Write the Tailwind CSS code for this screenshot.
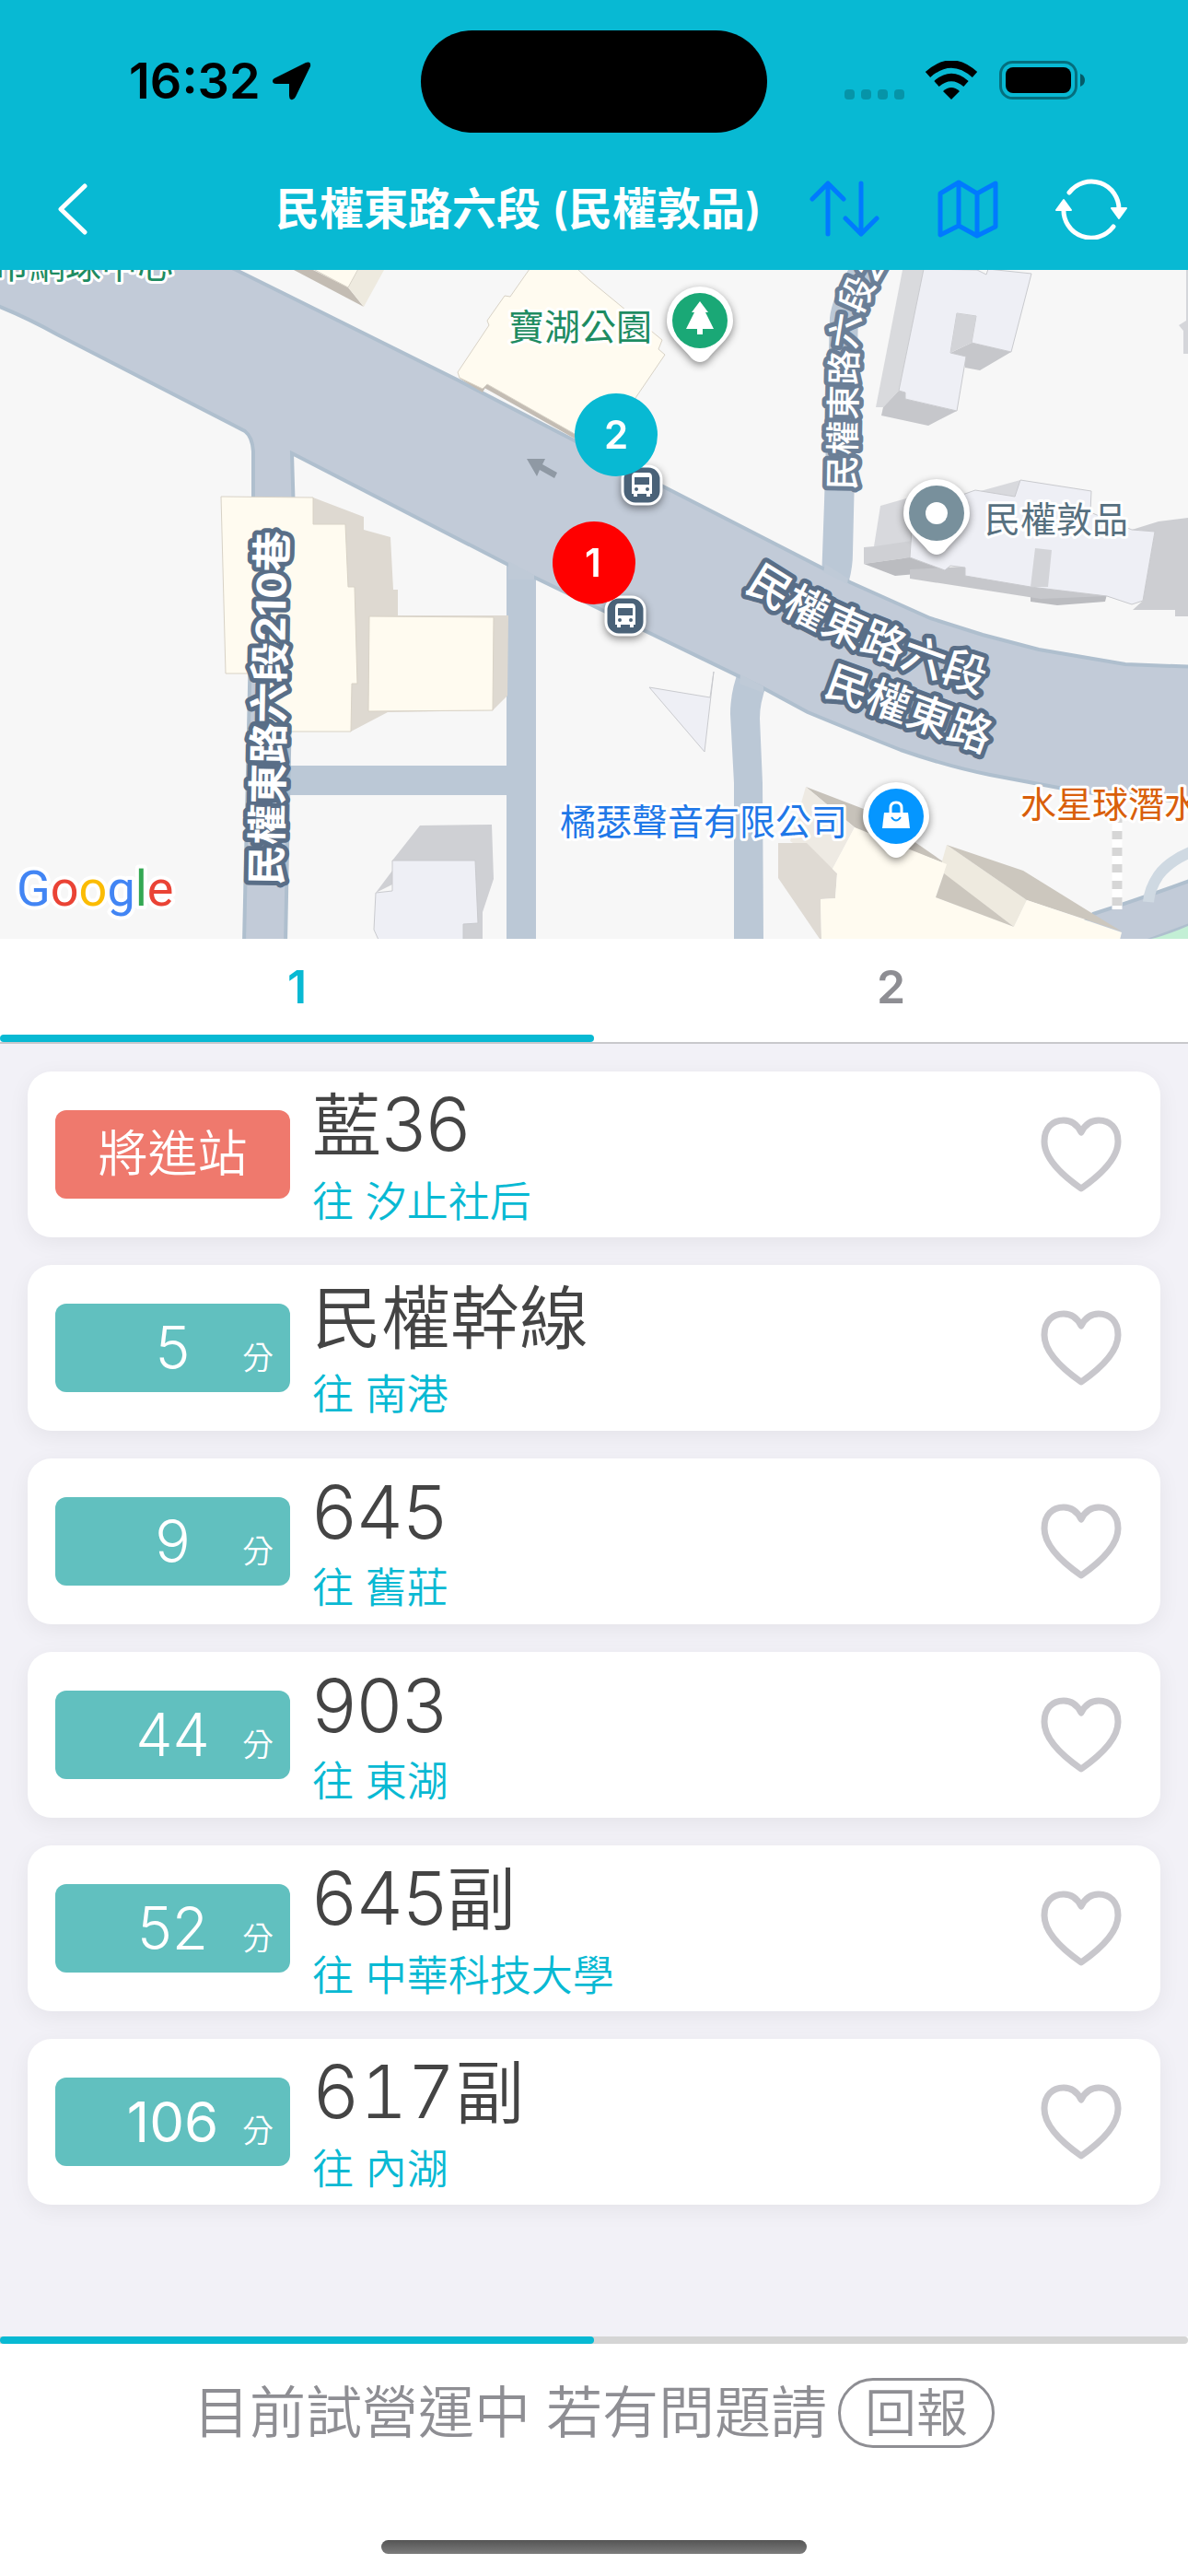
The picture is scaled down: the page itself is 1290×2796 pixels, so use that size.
<!DOCTYPE html>
<html lang="zh-Hant">
<head>
<meta charset="utf-8">
<meta name="viewport" content="width=device-width, initial-scale=1">
<title>民權東路六段 (民權敦品)</title>
<script src="https://cdn.jsdelivr.net/npm/@tailwindcss/browser@4"></script>
</head>
<body class="flex min-h-screen flex-col bg-white font-['Inter','Noto_Sans_CJK_TC',sans-serif]">

<!-- Shared symbols -->
<svg class="hidden" aria-hidden="true">
  <symbol id="heart" viewBox="0 0 88 82"><path d="M44 78 C24 64 4 46 4 27 C4 12 13 4 25 4 C34 4 40 9 44 17 C48 9 54 4 63 4 C75 4 84 12 84 27 C84 46 64 64 44 78Z" fill="none" stroke="#c8c7cc" stroke-width="7" stroke-linejoin="round"/></symbol>
  <symbol id="pin" viewBox="0 0 80 92" overflow="visible"><path d="M40 4 A36 37 0 0 1 76 41 C76 58 62 66 49 82 Q40 90 31 82 C18 66 4 58 4 41 A36 37 0 0 1 40 4Z" fill="#fff"/></symbol>
  <symbol id="bus" viewBox="0 0 46 46" overflow="visible"><rect x="2" y="2" width="42" height="41" rx="14" fill="#4a6278" stroke="#fff" stroke-width="3"/><path d="M16 9h14q4 0 4 5v18h-2v3h-4v-3H18v3h-4v-3h-2V14q0-5 4-5Z" fill="#fff"/><rect x="15" y="14" width="16" height="8" fill="#4a6278"/><circle cx="17" cy="27" r="2" fill="#4a6278"/><circle cx="29" cy="27" r="2" fill="#4a6278"/></symbol>
</svg>

<header class="bg-[#08b9d3]">
  <div class="relative flex h-[176px] items-center justify-between pr-[112px] pl-[140px]">
    <div class="flex items-center gap-3">
      <span class="text-[54px] leading-[60px] font-semibold">16:32</span>
      <svg class="h-[42px] w-[43px]" viewBox="0 0 43 42" aria-label="定位"><path d="M3 18 L37 1 Q43 -1 42 5 L26 38 Q24 42 21 41 Q19 40 19 37 V24 H5 Q1 24 1 21 Q1 19 3 18Z"/></svg>
    </div>
    <div class="absolute top-[33px] left-1/2 h-[111px] w-[376px] -translate-x-1/2 rounded-full bg-black"></div>
    <div class="flex items-center">
      <svg class="h-[44px] w-[261px]" viewBox="0 0 261 44" aria-label="訊號、Wi-Fi、電池">
        <g fill="#000" fill-opacity=".2"><rect y="31" width="11" height="11" rx="4"/><rect x="18" y="31" width="11" height="11" rx="4"/><rect x="36" y="31" width="11" height="11" rx="4"/><rect x="54" y="31" width="11" height="11" rx="4"/></g>
        <path d="M116 42 L107 33 Q116 25 125 33Z"/>
        <path d="M100 25 Q116 11 132 25" fill="none" stroke="#000" stroke-width="8"/>
        <path d="M90.500 15 Q116 -8 141.500 15" fill="none" stroke="#000" stroke-width="8"/>
        <rect x="169.500" y="1.500" width="82" height="39" rx="13" fill="none" stroke="#000" stroke-opacity=".4" stroke-width="3"/>
        <rect x="175" y="7" width="71" height="28" rx="8"/>
        <path d="M256 14 Q261 16 261 21 T256 28Z" fill-opacity=".5"/>
      </svg>
    </div>
  </div>
  <nav class="flex h-[117px] items-center justify-between pr-[66px] pb-[15px] pl-[59px]">
    <button type="button" aria-label="返回" class="p-1"><svg class="h-[56px] w-[34px]" viewBox="0 0 34 56"><path d="M29 3 L3 28 L29 53" fill="none" stroke="#fff" stroke-width="5" stroke-linecap="round" stroke-linejoin="round"/></svg></button>
    <div class="flex items-center">
      <h1 class="mr-[52px] text-[48px] leading-[60px] font-semibold text-white">民權東路六段 (民權敦品)</h1>
      <button type="button" aria-label="排序" class="mr-[62px]"><svg class="h-[62px] w-[76px]" viewBox="0 0 76 62"><g fill="none" stroke="#007aff" stroke-width="5" stroke-linecap="round" stroke-linejoin="round"><path d="M20 58V3M3 20L20 3L37 20M56 3V58M39 41L56 58L73 41"/></g></svg></button>
      <button type="button" aria-label="地圖" class="mr-[61px]"><svg class="h-[64px] w-[68px]" viewBox="0 0 68 64"><g fill="none" stroke="#007aff" stroke-width="5" stroke-linecap="round" stroke-linejoin="round"><path d="M4 15L24 3L44 15L64 4V51L44 61L24 50L4 60ZM24 3V50M44 15V61"/></g></svg></button>
      <button type="button" aria-label="重新整理"><svg class="h-[66px] w-[78px]" viewBox="0 0 78 66"><g fill="none" stroke="#fff" stroke-width="5" stroke-linecap="round"><path d="M15 15 A30 30 0 0 1 69 34M63 52 A30 30 0 0 1 9 32"/></g><g fill="#fff" stroke="#fff" stroke-width="2" stroke-linejoin="round"><path d="M61 32H77L69 43ZM1 34H17L9 23Z"/></g></svg></button>
    </div>
  </nav>
</header>

<section aria-label="地圖" class="h-[726px] overflow-hidden bg-[#f7f7f7]">
<svg class="block h-full w-full" viewBox="0 293 1290 726" preserveAspectRatio="xMidYMid slice">
  <!-- minor roads -->
  <g fill="#bbc8d6">
    <path d="M550 600H582V1019H550ZM312 831H552V863H312Z"/>
    <path d="M803 725Q793 750 793 775L797 850V1019H829L828 850L825 780Q825 760 834 740Z"/>
    <path d="M921 293Q903 325 901 345L895 545L892 630H922Q926 615 926 600L932 340Q935 325 955 293Z"/>
  </g>
  <!-- main roads -->
  <g fill="#c2cbd8" stroke="#afbfce" stroke-width="4">
    <path d="M-5 280V331Q30 345 62 363L266 468Q274 474 275 490V560L265 1025H310L319 560L317 492L550 612L701 685L829 747L877 773Q930 795 978 814Q1030 832 1075 841L1160 857Q1230 868 1300 870V724L1222 721L1128 705L1067 689L1010 671L923 632L720 528L498 413L315 322L230 280Z"/>
    <path d="M1150 1025L1187 992Q1240 975 1300 953V1001Q1260 1016 1235 1025Z"/>
  </g>
  <!-- openings where minor roads join -->
  <path d="M552 609L580 624V629H552ZM804 732L829 745V752L803 742ZM896 612L921 628L920 634L894 621Z" fill="#bfcad7"/>
  <path d="M1250 1019Q1265 1016 1290 1005V1019Z" fill="#c3efd5"/>
  <path d="M1295 924Q1270 934 1258 950Q1248 965 1247 979" fill="none" stroke="#cfd9e2" stroke-width="12"/>
  <path d="M1213 884V987" stroke="#fff" stroke-width="11"/><path d="M1213 884V987" stroke="#d6d6d6" stroke-width="11" stroke-dasharray="9 9"/>
  <path d="M572 498L592 498L589 504L605 513L602 519L586 510L583 517Z" fill="#8f99a4"/>

  <!-- cream buildings -->
  <g fill="#c3bcb3"><path d="M319 293L395 333L378 312L340 293ZM498 410L524 426L529 417Z"/><path d="M529 417L626 471L624 476L526 421Z"/></g>
  <path d="M378 312L395 333L417 293H389Z" fill="#eeeadf"/>
  <g fill="#fffbf0" stroke="#d8d2c6" stroke-width="1">
    <path d="M340 292L378 312L389 292Z"/>
    <path d="M575 292L554 322L548 321L529 348L531 353L497 404L499 410L524 422L529 417L624 471L660 490L690 432L722 385L715 379L719 369L640 304L627 292Z"/>
  </g>
  <g fill="#ded9d1"><path d="M340 540L395 561V575L424 583L427 640H432V668H552L551 755L535 771L421 773L381 794L340 600Z"/></g>
  <g fill="#fffbf0" stroke="#d8d2c6" stroke-width="1">
    <path d="M240 539L340 540V569H375L378 637H385L388 742H382L381 794H290V731H245Z"/>
    <path d="M401 669L536 670L535 771L400 772Z"/>
  </g>
  <g>
    <path d="M875 854L943 880V912L928 898Z" fill="#c7c2ba"/>
    <path d="M875 854L928 898L904 943L858 913Z" fill="#eeeae3"/>
    <path d="M845 915H876L904 943L909 948L907 975L891 976L892 1019H890L845 953Z" fill="#dfdad3"/>
    <path d="M992 913L1028 938L980 920Z" fill="#c7c2ba"/>
    <path d="M1028 917L1115 977L1101 1006L1020 945Z" fill="#eeeadf"/>
    <path d="M1028 917L1111 945L1187 992L1218 1011L1115 977Z" fill="#ccc7be"/>
    <path d="M928 898L1028 938L1016 974L1101 1006L1115 977L1218 1012L1216 1020H892L891 976L907 975L909 948L904 943Z" fill="#fffbf0"/>
    <path d="M1025 948L1101 1006L1016 974Z" fill="#ccc7be"/>
  </g>

  <!-- grey buildings -->
  <g>
    <path d="M426 934L456 896L534 895L536 954L524 990V1019H503L426 960L408 969L426 945Z" fill="#cfd0d4"/>
    <path d="M426 934H516L519 1002L503 1003V1020H411L406 1009L408 969L426 967Z" fill="#eeeff5" stroke="#c9cace"/>
    <path d="M705 746L771 757L775 729L765 816Z" fill="#eeeff5" stroke="#c9cace"/>
    <path d="M980 293L951 442H959L976 424L1003 293Z" fill="#d9dadd"/>
    <path d="M957 451L1008 462L1039 446L983 433L983 426L976 424L959 442ZM1055 372L1098 382L1064 402L1048 399V387L1032 383Z" fill="#c6c7cb"/>
    <path d="M1003 292L1061 293L1071 298L1073 292L1120 297L1098 382L1055 372L1060 343L1039 340L1032 383L1049 387L1039 446L983 433V426L976 424Z" fill="#eeeff5" stroke="#c9cace"/>
    <path d="M1039 340L1060 343L1055 372L1032 383Z" fill="#d3d4d8"/>
    <path d="M1288 293V348L1280 353L1285 359V384H1290V293Z" fill="#d5d6da"/>
    <path d="M1229 575L1258 566L1290 562V669H1276V662H1230L1241 652L1254 577Z" fill="#cdced2"/>
    <path d="M956 549L984 541L1008 560L988 607L949 593ZM1050 537L1108 521L1102 545Z" fill="#d8d9dd"/>
    <path d="M938 594L950 593L990 587L988 605L938 612Z" fill="#cfd0d4"/>
    <path d="M938 612L988 605L1030 620L972 625ZM1119 645H1202L1200 653L1148 657L1119 653Z" fill="#bbbcc0"/>
    <path d="M988 628V618L1048 615L1125 637L1202 647L1130 650Z" fill="#c6c7cb"/>
    <path d="M1059 532L1102 539L1108 521L1185 533L1184 556L1229 575L1254 577L1241 652L1229 656L1202 647L1119 637L1048 625V616L1032 614L1026 619L988 605L990 575L1045 537Z" fill="#eeeff5" stroke="#c9cace"/>
    <path d="M1124 595L1142 597L1138 637L1119 637Z" fill="#d3d4d8"/>
  </g>

  <!-- place labels -->
  <g font-size="39" stroke="#fff" stroke-width="6" stroke-linejoin="round" paint-order="stroke">
    <text x="-7" y="302" fill="#1e8c62">市網球中心</text>
    <text x="552" y="369" fill="#1e8c62">寶湖公園</text>
    <text x="1069" y="578" fill="#57707f">民權敦品</text>
    <text x="608" y="906" fill="#1f78e8">橘瑟聲音有限公司</text>
    <text x="1108" y="887" fill="#d95f0b">水星球潛水</text>
  </g>
  <!-- road labels -->
  <path id="lane" d="M928 532L931 365Q935 330 971 275" fill="none"/>
  <path id="main" d="M808 639Q905 706 1100 763" fill="none"/>
  <g fill="#fff" stroke="#596e87" stroke-linejoin="round" paint-order="stroke" font-weight="500" stroke-width="10">
    <text transform="translate(305 961) rotate(-89)" font-size="44" font-weight="700">民權東路六段210巷</text>
    <text font-size="38" stroke="#6b7f97"><textPath href="#lane">民權東路六段2</textPath></text>
    <text font-size="47"><textPath href="#main">民權東路六段</textPath></text>
    <text transform="translate(893 753) rotate(20)" font-size="47">民權東路</text>
  </g>

  <!-- pins -->
  <g class="drop-shadow-[0_3px_4px_rgba(0,0,0,0.45)]">
    <use href="#pin" x="720" y="307" width="80" height="92"/><use href="#pin" x="977" y="516" width="80" height="92"/><use href="#pin" x="933" y="845" width="80" height="92"/>
    <use href="#bus" x="656" y="646" width="46" height="46"/><use href="#bus" x="674" y="504" width="46" height="46"/>
  </g>
  <circle cx="760" cy="348" r="30" fill="#1aa876"/><path d="M760 327L769 339H766L775 357H763V363H757V357H745L754 339H751Z" fill="#fff"/>
  <circle cx="1017" cy="557" r="30" fill="#78909c"/><circle cx="1017" cy="557" r="12" fill="#fff"/>
  <circle cx="973" cy="886" r="30" fill="#0596ff"/><path d="M960 882H986L988 899H958Z" fill="#fff"/><path d="M967 883V877Q967 871 973 871T979 877V883" fill="none" stroke="#fff" stroke-width="3"/><path d="M968 887Q973 894 978 887" fill="none" stroke="#0596ff" stroke-width="2"/>
  <circle cx="669" cy="472" r="45" fill="#08b9d3"/><circle cx="645" cy="611" r="45" fill="#f00"/>
  <g fill="#fff" font-size="42" font-weight="600" text-anchor="middle"><text x="669" y="487">2</text><text x="644" y="626">1</text></g>
  <!-- attribution -->
  <text x="18" y="983" font-family="Roboto, sans-serif" font-size="54" stroke="#fff" stroke-width="8" stroke-linejoin="round" paint-order="stroke"><tspan fill="#4285f4">G</tspan><tspan fill="#ea4335">o</tspan><tspan fill="#fbbc04">o</tspan><tspan fill="#4285f4">g</tspan><tspan fill="#34a853">l</tspan><tspan fill="#ea4335">e</tspan></text>
</svg>
</section>

<div role="tablist" class="grid grid-cols-2 border-b-2 border-[#c8c8cc] bg-white text-[50px] leading-[104px] font-semibold">
  <button type="button" role="tab" aria-selected="true" class="text-[#08b9d3]">1<span class="block h-2 rounded-full bg-[#08b9d3]"></span></button>
  <button type="button" role="tab" aria-selected="false" class="text-[#8e8e93]">2<span class="block h-2"></span></button>
</div>

<main class="flex-1 bg-[#f2f1f7]">
  <ul class="flex flex-col gap-[30px] p-[30px]">
    <li class="flex h-[180px] items-center rounded-[26px] bg-white px-[30px] shadow-[0_6px_24px_rgba(0,0,0,0.06)]">
      <div class="flex h-24 w-[255px] items-center justify-center rounded-xl bg-[#ef796d] text-[54px] leading-[60px] font-[350] text-white">將進站</div>
      <div class="ml-6 flex-1"><h2 class="text-[75px] leading-[102px] font-[350] text-[#444]">藍<span class="text-[80px]">36</span></h2><p class="text-[45px] leading-[64px] font-[350] text-[#08b9d3]">往 汐止社后</p></div>
      <button type="button" aria-label="收藏 藍36" class="mr-3"><svg class="h-[82px] w-[88px]"><use href="#heart"/></svg></button>
    </li>
    <li class="flex h-[180px] items-center rounded-[26px] bg-white px-[30px] shadow-[0_6px_24px_rgba(0,0,0,0.06)]">
      <div class="grid h-24 w-[255px] grid-cols-[1fr_auto_1fr] items-baseline rounded-xl bg-[#61c0bf] font-[350] text-white"><span></span><span class="text-[64px] leading-[96px]">5</span><span class="pr-[18px] text-right text-[34px] leading-[40px]">分</span></div>
      <div class="ml-6 flex-1"><h2 class="text-[75px] leading-[102px] font-[350] text-[#444]">民權幹線</h2><p class="text-[45px] leading-[64px] font-[350] text-[#08b9d3]">往 南港</p></div>
      <button type="button" aria-label="收藏 民權幹線" class="mr-3"><svg class="h-[82px] w-[88px]"><use href="#heart"/></svg></button>
    </li>
    <li class="flex h-[180px] items-center rounded-[26px] bg-white px-[30px] shadow-[0_6px_24px_rgba(0,0,0,0.06)]">
      <div class="grid h-24 w-[255px] grid-cols-[1fr_auto_1fr] items-baseline rounded-xl bg-[#61c0bf] font-[350] text-white"><span></span><span class="text-[64px] leading-[96px]">9</span><span class="pr-[18px] text-right text-[34px] leading-[40px]">分</span></div>
      <div class="ml-6 flex-1"><h2 class="text-[80px] leading-[102px] font-[350] text-[#444]">645</h2><p class="text-[45px] leading-[64px] font-[350] text-[#08b9d3]">往 舊莊</p></div>
      <button type="button" aria-label="收藏 645" class="mr-3"><svg class="h-[82px] w-[88px]"><use href="#heart"/></svg></button>
    </li>
    <li class="flex h-[180px] items-center rounded-[26px] bg-white px-[30px] shadow-[0_6px_24px_rgba(0,0,0,0.06)]">
      <div class="grid h-24 w-[255px] grid-cols-[1fr_auto_1fr] items-baseline rounded-xl bg-[#61c0bf] font-[350] text-white"><span></span><span class="text-[64px] leading-[96px]">44</span><span class="pr-[18px] text-right text-[34px] leading-[40px]">分</span></div>
      <div class="ml-6 flex-1"><h2 class="text-[80px] leading-[102px] font-[350] text-[#444]">903</h2><p class="text-[45px] leading-[64px] font-[350] text-[#08b9d3]">往 東湖</p></div>
      <button type="button" aria-label="收藏 903" class="mr-3"><svg class="h-[82px] w-[88px]"><use href="#heart"/></svg></button>
    </li>
    <li class="flex h-[180px] items-center rounded-[26px] bg-white px-[30px] shadow-[0_6px_24px_rgba(0,0,0,0.06)]">
      <div class="grid h-24 w-[255px] grid-cols-[1fr_auto_1fr] items-baseline rounded-xl bg-[#61c0bf] font-[350] text-white"><span></span><span class="text-[64px] leading-[96px]">52</span><span class="pr-[18px] text-right text-[34px] leading-[40px]">分</span></div>
      <div class="ml-6 flex-1"><h2 class="text-[75px] leading-[102px] font-[350] text-[#444]"><span class="text-[80px]">645</span>副</h2><p class="text-[45px] leading-[64px] font-[350] text-[#08b9d3]">往 中華科技大學</p></div>
      <button type="button" aria-label="收藏 645副" class="mr-3"><svg class="h-[82px] w-[88px]"><use href="#heart"/></svg></button>
    </li>
    <li class="flex h-[180px] items-center rounded-[26px] bg-white px-[30px] shadow-[0_6px_24px_rgba(0,0,0,0.06)]">
      <div class="grid h-24 w-[255px] grid-cols-[1fr_auto_1fr] items-baseline rounded-xl bg-[#61c0bf] font-[350] text-white"><span></span><span class="text-[60px] leading-[96px] font-normal">106</span><span class="pr-[18px] text-right text-[34px] leading-[40px]">分</span></div>
      <div class="ml-6 flex-1"><h2 class="text-[75px] leading-[102px] font-[350] text-[#444]"><span class="text-[80px] tabular-nums">617</span>副</h2><p class="text-[45px] leading-[64px] font-[350] text-[#08b9d3]">往 內湖</p></div>
      <button type="button" aria-label="收藏 617副" class="mr-3"><svg class="h-[82px] w-[88px]"><use href="#heart"/></svg></button>
    </li>
  </ul>
</main>

<footer class="flex h-[260px] flex-col items-center bg-white">
  <div class="h-2 w-full rounded-r-full bg-[#d5d5d5]"><div class="h-full w-1/2 rounded-full bg-[#08b9d3]"></div></div>
  <div class="mt-[37px] flex items-center gap-3 text-[#8e8e93]">
    <p class="text-[61px] leading-[76px] font-[350]">目前試營運中 若有問題請</p>
    <button type="button" class="h-[76px] rounded-full border-3 border-[#8e8e93] px-[26px] text-[56px] leading-[70px] font-[350]">回報</button>
  </div>
  <div class="mt-auto mb-6 h-[15px] w-[462px] rounded-full bg-linear-to-b from-[#555] to-[#7c7c7c]"></div>
</footer>
</body>
</html>
